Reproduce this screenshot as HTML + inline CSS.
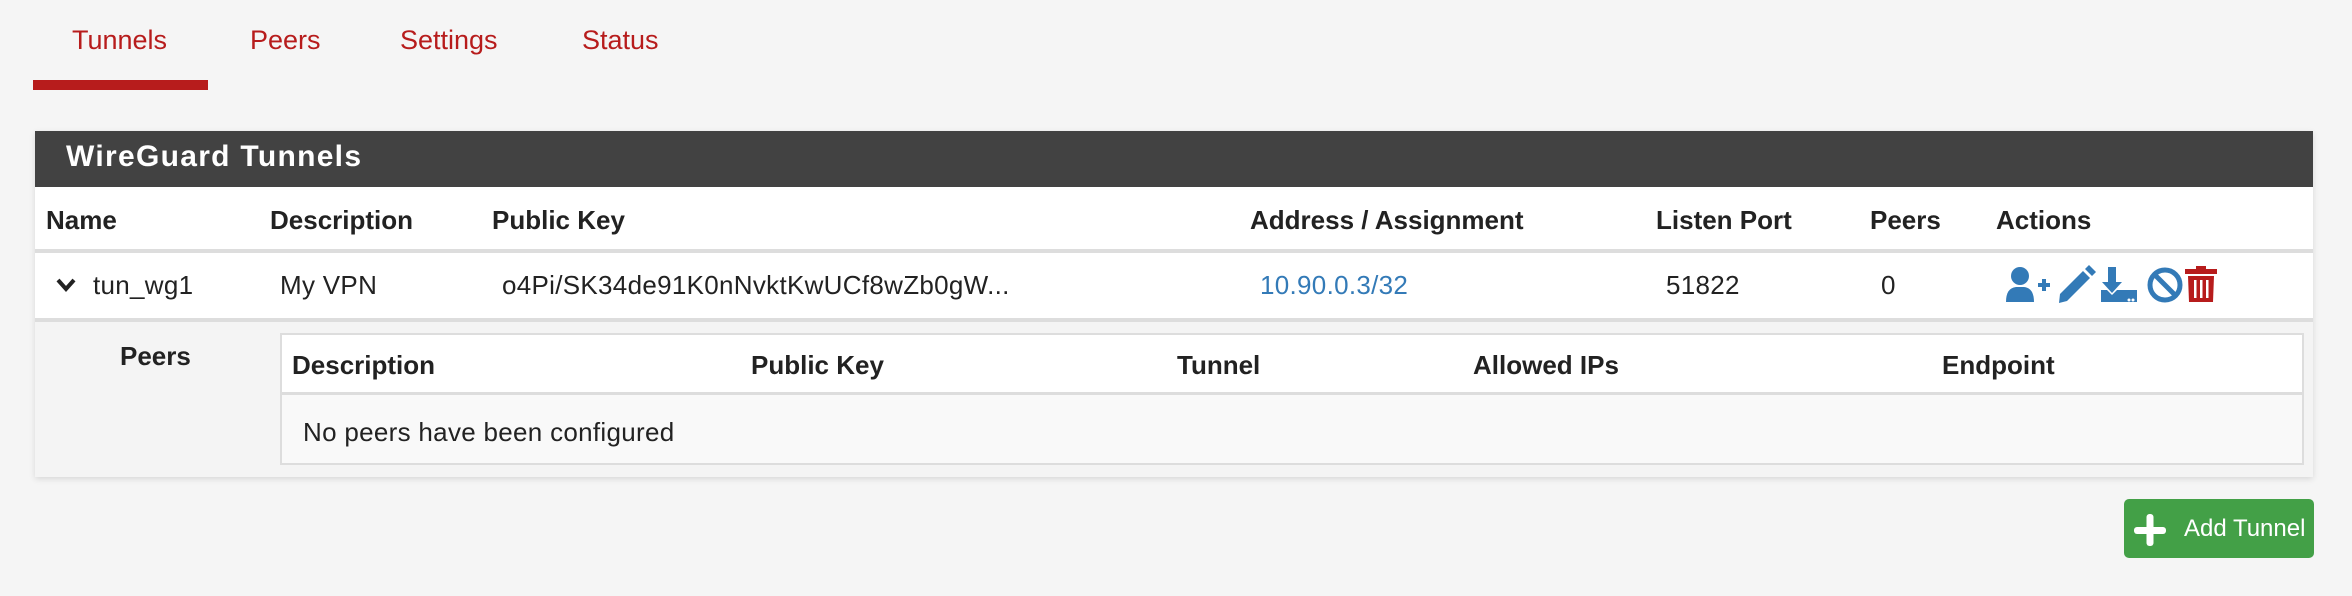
<!DOCTYPE html>
<html><head><meta charset="utf-8"><style>
*{margin:0;padding:0;box-sizing:border-box}
body{width:2352px;height:596px;background:#f5f5f5;font-family:"Liberation Sans",sans-serif;position:relative;overflow:hidden;color:#222}
.a{position:absolute;white-space:nowrap;line-height:1}
.tab{color:#b71c1c;font-size:27px;top:27px}
.th{font-weight:bold;font-size:26px;color:#222}
.td{font-size:26px;color:#222;letter-spacing:0.3px}
</style></head><body>
<div class="a tab" style="left:72px">Tunnels</div>
<div class="a tab" style="left:250px">Peers</div>
<div class="a tab" style="left:400px">Settings</div>
<div class="a tab" style="left:582px">Status</div>
<div class="a" style="left:33px;top:80px;width:175px;height:10px;background:#b71c1c"></div>

<div class="a" style="left:35px;top:131px;width:2278px;height:346px;background:#fff;box-shadow:0 2px 6px rgba(0,0,0,.12)"></div>
<div class="a" style="left:35px;top:131px;width:2278px;height:56px;background:#424242"></div>
<div class="a" style="left:66px;top:142px;color:#fff;font-weight:bold;font-size:30px;letter-spacing:1.3px">WireGuard Tunnels</div>

<div class="a th" style="left:46px;top:207px">Name</div>
<div class="a th" style="left:270px;top:207px">Description</div>
<div class="a th" style="left:492px;top:207px">Public Key</div>
<div class="a th" style="left:1250px;top:207px">Address / Assignment</div>
<div class="a th" style="left:1656px;top:207px">Listen Port</div>
<div class="a th" style="left:1870px;top:207px">Peers</div>
<div class="a th" style="left:1996px;top:207px">Actions</div>
<div class="a" style="left:35px;top:249px;width:2278px;height:4px;background:#ddd"></div>

<svg class="a" style="left:56px;top:277px" width="20" height="16" viewBox="0 0 20 16"><path d="M2 3 L10 12 L18 3" stroke="#222" stroke-width="4" fill="none"/></svg>
<div class="a td" style="left:93px;top:272px">tun_wg1</div>
<div class="a td" style="left:280px;top:272px">My VPN</div>
<div class="a td" style="left:502px;top:272px">o4Pi/SK34de91K0nNvktKwUCf8wZb0gW...</div>
<div class="a td" style="left:1260px;top:272px;color:#337ab7">10.90.0.3/32</div>
<div class="a td" style="left:1666px;top:272px">51822</div>
<div class="a td" style="left:1881px;top:272px">0</div>

<svg class="a" style="left:2005px;top:264px" width="220" height="42" viewBox="0 0 220 42">
 <g fill="#337ab7">
  <circle cx="15" cy="12" r="9"/>
  <path d="M1 38 Q1 24 11 23 L19 23 Q29 24 29 38 Z"/>
  <rect x="33" y="19" width="12" height="4"/><rect x="37" y="15" width="4" height="12"/>
  <path d="M55 30 L78 7 L85 14 L62 37 L54 39 Z"/><path d="M80 5 L84 1 L91 8 L87 12 Z"/>
  <rect x="103" y="3" width="8" height="17"/><path d="M97 18 L117 18 L107 29 Z"/>
  <path d="M96 26 L102 26 L107 31 L112 26 L132 26 L132 38 L96 38 Z"/>
 </g>
 <circle cx="128" cy="36" r="1.5" fill="#fff"/><circle cx="124" cy="36" r="1.5" fill="#fff"/>
 <circle cx="160" cy="21" r="15" stroke="#337ab7" stroke-width="5" fill="none"/>
 <path d="M150 11 L170 31" stroke="#337ab7" stroke-width="5"/>
 <g fill="#b71c1c">
  <rect x="180" y="5" width="32" height="5"/><rect x="191" y="2" width="10" height="4"/>
  <path d="M183 12 L209 12 L208 38 L184 38 Z"/>
 </g>
 <g fill="#fff"><rect x="189" y="16" width="2.5" height="18"/><rect x="195" y="16" width="2.5" height="18"/><rect x="201" y="16" width="2.5" height="18"/></g>
</svg>

<div class="a" style="left:35px;top:318px;width:2278px;height:4px;background:#ddd"></div>
<div class="a" style="left:35px;top:322px;width:2278px;height:155px;background:#f4f4f4"></div>
<div class="a th" style="left:120px;top:343px">Peers</div>
<div class="a" style="left:280px;top:333px;width:2024px;height:132px;background:#f9f9f9;border:2px solid #ddd"></div>
<div class="a" style="left:282px;top:335px;width:2020px;height:60px;background:#fff;border-bottom:3px solid #ddd"></div>
<div class="a th" style="left:292px;top:352px">Description</div>
<div class="a th" style="left:751px;top:352px">Public Key</div>
<div class="a th" style="left:1177px;top:352px">Tunnel</div>
<div class="a th" style="left:1473px;top:352px">Allowed IPs</div>
<div class="a th" style="left:1942px;top:352px">Endpoint</div>
<div class="a td" style="left:303px;top:419px">No peers have been configured</div>

<div class="a" style="left:2124px;top:499px;width:190px;height:59px;background:#43a047;border-radius:5px"></div>
<svg class="a" style="left:2134px;top:514px" width="32" height="32" viewBox="0 0 32 32"><rect x="0" y="13" width="32" height="7" rx="3" fill="#fff"/><rect x="12.5" y="0" width="7" height="32" rx="3" fill="#fff"/></svg>
<div class="a" style="left:2184px;top:517px;color:#fff;font-size:24px">Add Tunnel</div>
</body></html>
